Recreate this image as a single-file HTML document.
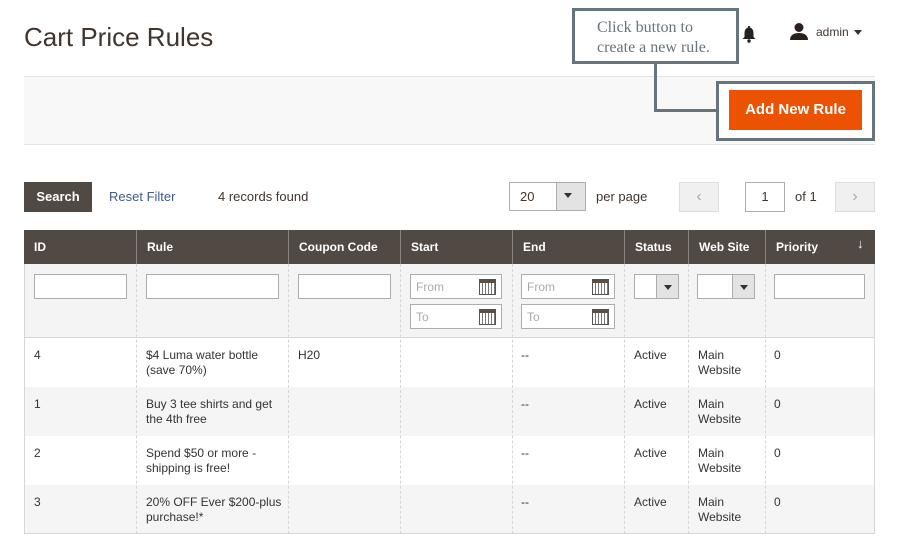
<!DOCTYPE html><html><head><meta charset="utf-8"><style>
*{box-sizing:border-box;margin:0;padding:0}
body{width:900px;height:557px;background:#fff;font-family:"Liberation Sans",sans-serif;color:#41362f;position:relative;overflow:hidden;font-size:12px}
.a{position:absolute}
.inp{position:absolute;background:#fff;border:1px solid #adadad;height:25px}
.cell{position:absolute;font-size:12px;line-height:15px;color:#333}
.th{position:absolute;top:230px;height:34px;color:#fff;font-weight:bold;font-size:12px;line-height:34px;padding-left:10px;border-left:1px solid #8a837f}
.vl{position:absolute;top:264px;height:270px;border-left:1px dashed #d6d6d6}
.cal{position:absolute;right:5px;top:4px;width:17px;height:16px;border:1px solid #555;background:repeating-linear-gradient(90deg,#fff 0 2px,#777 2px 3px);border-top:4px solid #5a4f47}
.ph{position:absolute;left:5px;top:5px;color:#aaa;font-size:12px}
.sel{position:absolute;background:#fff;border:1px solid #adadad;height:25px}
.sel b{position:absolute;right:0;top:0;width:22px;height:23px;background:#e3e3e3;border-left:1px solid #adadad}
.sel b:after{content:"";position:absolute;left:7px;top:10px;border:4px solid transparent;border-top:5px solid #333;border-bottom:0}
</style></head><body>
<div class="a" style="left:24px;top:22px;font-size:26px;color:#41362f">Cart Price Rules</div>
<div class="a" style="left:572px;top:8px;width:167px;height:56px;border:3px solid #67747b;background:#fff;font-family:'Liberation Serif',serif;font-size:16px;color:#67747b;line-height:20px;padding:7px 0 0 22px">Click button to<br>create a new rule.</div>
<svg class="a" style="left:741px;top:25px" width="16" height="18" viewBox="0 0 16 18"><path d="M8 1a1 1 0 0 1 1 1.5C12 3.5 12.5 6 12.5 9v3l2 2H1.5l2-2V9c0-3 .5-5.5 3.5-6.5A1 1 0 0 1 8 1z" fill="#222"/><circle cx="8" cy="16" r="1.7" fill="#222"/></svg>
<svg class="a" style="left:789px;top:22px" width="20" height="18" viewBox="0 0 20 18"><circle cx="10" cy="5.5" r="4.5" fill="#2b211c"/><path d="M1 18c0-5 4-7 9-7s9 2 9 7z" fill="#2b211c"/></svg>
<div class="a" style="left:816px;top:25px;font-size:12px;color:#41362f">admin</div>
<div class="a" style="left:854px;top:30px;border:4px solid transparent;border-top:5px solid #333;border-bottom:0"></div>
<div class="a" style="left:24px;top:76px;width:851px;height:69px;background:#f8f8f8;border-top:1px solid #e3e3e3;border-bottom:1px solid #e3e3e3"></div>
<div class="a" style="left:654px;top:63px;width:3px;height:49px;background:#67747b"></div>
<div class="a" style="left:654px;top:109px;width:64px;height:3px;background:#67747b"></div>
<div class="a" style="left:716px;top:81px;width:159px;height:60px;border:3px solid #67747b;background:#fff"></div>
<div class="a" style="left:729px;top:90px;width:133px;height:40px;background:#eb5202;color:#fff;font-weight:bold;font-size:15px;line-height:40px;text-align:center">Add New Rule</div>
<div class="a" style="left:24px;top:182px;width:68px;height:30px;background:#514943;color:#fff;font-weight:bold;font-size:13px;line-height:30px;text-align:center">Search</div>
<div class="a" style="left:109px;top:189px;font-size:13px;color:#41598b">Reset Filter</div>
<div class="a" style="left:218px;top:189px;font-size:13px;color:#41362f">4 records found</div>
<div class="sel" style="left:509px;top:182px;width:77px;height:29px"><b style="width:29px;height:27px"></b></div>
<div class="a" style="left:520px;top:189px;font-size:13px">20</div>
<div class="a" style="left:596px;top:189px;font-size:13px">per page</div>
<div class="a" style="left:679px;top:182px;width:40px;height:30px;background:#f0f0f0;border:1px solid #ddd;text-align:center;line-height:27px;color:#aaa;font-size:16px">&lsaquo;</div>
<div class="a" style="left:745px;top:182px;width:40px;height:30px;border:1px solid #adadad;text-align:center;line-height:28px;font-size:13px">1</div>
<div class="a" style="left:795px;top:189px;font-size:13px">of 1</div>
<div class="a" style="left:835px;top:182px;width:40px;height:30px;background:#f0f0f0;border:1px solid #ddd;text-align:center;line-height:27px;color:#aaa;font-size:16px">&rsaquo;</div>
<div class="a" style="left:24px;top:230px;width:851px;height:34px;background:#514943"></div>
<div class="a" style="left:24px;top:264px;width:851px;height:74px;background:#f4f4f4;border-left:1px solid #d6d6d6;border-right:1px solid #d6d6d6;border-bottom:1px solid #d6d6d6"></div>
<div class="a" style="left:24px;top:387px;width:851px;height:49px;background:#f5f5f5"></div>
<div class="a" style="left:24px;top:485px;width:851px;height:49px;background:#f5f5f5"></div>
<div class="a" style="left:24px;top:338px;width:851px;height:196px;border-left:1px solid #d6d6d6;border-right:1px solid #d6d6d6;border-bottom:1px solid #d6d6d6"></div>
<div class="th" style="left:24px;border-left:0">ID</div>
<div class="th" style="left:136px">Rule</div>
<div class="th" style="left:288px">Coupon Code</div>
<div class="th" style="left:400px">Start</div>
<div class="th" style="left:512px">End</div>
<div class="th" style="left:624px">Status</div>
<div class="th" style="left:688px">Web Site</div>
<div class="th" style="left:765px">Priority</div>
<div class="a" style="left:857px;top:236px;color:#fff;font-size:13px">&#8595;</div>
<div class="vl" style="left:136px"></div><div class="vl" style="left:288px"></div><div class="vl" style="left:400px"></div><div class="vl" style="left:512px"></div><div class="vl" style="left:624px"></div><div class="vl" style="left:688px"></div><div class="vl" style="left:765px"></div>
<div class="inp" style="left:34px;top:274px;width:93px"></div>
<div class="inp" style="left:146px;top:274px;width:133px"></div>
<div class="inp" style="left:298px;top:274px;width:93px"></div>
<div class="inp" style="left:410px;top:274px;width:92px"><span class="ph">From</span><i class="cal"></i></div>
<div class="inp" style="left:410px;top:304px;width:92px"><span class="ph">To</span><i class="cal"></i></div>
<div class="inp" style="left:521px;top:274px;width:94px"><span class="ph">From</span><i class="cal"></i></div>
<div class="inp" style="left:521px;top:304px;width:94px"><span class="ph">To</span><i class="cal"></i></div>
<div class="sel" style="left:634px;top:274px;width:45px"><b></b></div>
<div class="sel" style="left:697px;top:274px;width:58px"><b></b></div>
<div class="inp" style="left:774px;top:274px;width:91px"></div>
<div class="cell" style="left:34px;top:348px">4</div><div class="cell" style="left:146px;top:348px">$4 Luma water bottle<br>(save 70%)</div><div class="cell" style="left:298px;top:348px">H20</div><div class="cell" style="left:521px;top:348px">--</div><div class="cell" style="left:634px;top:348px">Active</div><div class="cell" style="left:698px;top:348px">Main<br>Website</div><div class="cell" style="left:774px;top:348px">0</div>
<div class="cell" style="left:34px;top:397px">1</div><div class="cell" style="left:146px;top:397px">Buy 3 tee shirts and get<br>the 4th free</div><div class="cell" style="left:521px;top:397px">--</div><div class="cell" style="left:634px;top:397px">Active</div><div class="cell" style="left:698px;top:397px">Main<br>Website</div><div class="cell" style="left:774px;top:397px">0</div>
<div class="cell" style="left:34px;top:446px">2</div><div class="cell" style="left:146px;top:446px">Spend $50 or more -<br>shipping is free!</div><div class="cell" style="left:521px;top:446px">--</div><div class="cell" style="left:634px;top:446px">Active</div><div class="cell" style="left:698px;top:446px">Main<br>Website</div><div class="cell" style="left:774px;top:446px">0</div>
<div class="cell" style="left:34px;top:495px">3</div><div class="cell" style="left:146px;top:495px">20% OFF Ever $200-plus<br>purchase!*</div><div class="cell" style="left:521px;top:495px">--</div><div class="cell" style="left:634px;top:495px">Active</div><div class="cell" style="left:698px;top:495px">Main<br>Website</div><div class="cell" style="left:774px;top:495px">0</div>
</body></html>
